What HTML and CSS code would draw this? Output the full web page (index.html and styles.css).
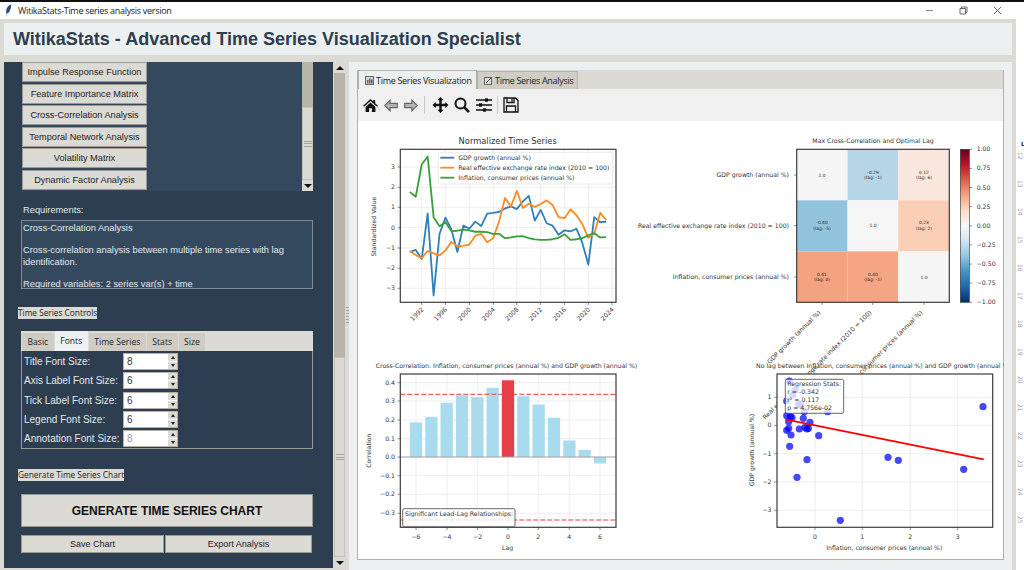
FILE: index.html
```html
<!DOCTYPE html>
<html lang="en">
<head>
    <meta charset="UTF-8">
    <title>WitikaStats-Time series analysis version</title>
    <link rel="stylesheet" href="styles.css">
</head>
<body>
<div class="topline"></div>
<div class="screen">
<div class="app">
    <div class="titlebar">
        <svg class="feather" viewBox="0 0 8 14"><path d="M7 0C3 1 1 5 1.500 10L1 14 2 10.500C5 10 7 5 7 0Z"/></svg>
        <span class="titlebar-text">WitikaStats-Time series analysis version</span>
        <div class="winbtns">
            <svg viewBox="0 0 9 9"><path d="M1 4.500H8" class="win-min"/></svg>
            <svg viewBox="0 0 9 9"><path d="M1 2.500H6.500V8H1ZM2.500 2.500V1H8V6.500H6.500" class="win-ico"/></svg>
            <svg viewBox="0 0 9 9"><path d="M1 1L8 8M8 1L1 8" class="win-ico"/></svg>
        </div>
    </div>
    <div class="window">
        <header class="app-header">WitikaStats - Advanced Time Series Visualization Specialist</header>
        <div class="main">
            <aside class="sidebar">
                <div class="method-box">
                    <div class="method-list">
                        <button class="method-btn">Impulse Response Function</button>
                        <button class="method-btn">Feature Importance Matrix</button>
                        <button class="method-btn">Cross-Correlation Analysis</button>
                        <button class="method-btn">Temporal Network Analysis</button>
                        <button class="method-btn">Volatility Matrix</button>
                        <button class="method-btn">Dynamic Factor Analysis</button>
                    </div>
                    <div class="scroll scroll-inner">
                        <div class="scroll-trough"></div>
                        <div class="scroll-thumb"><span class="grip"></span></div>
                        <div class="scroll-arrow down"></div>
                    </div>
                </div>

                <div class="req-label">Requirements:</div>
                <div class="req-text">
                    <p>Cross-Correlation Analysis</p>
                    <p>Cross-correlation analysis between multiple time series with lag identification.</p>
                    <p>Required variables: 2 series var(s) + time</p>
                </div>

                <div class="section-label controls-label">Time Series Controls</div>
                <div class="controls">
                    <div class="sub-tabs">
                        <span class="sub-tab">Basic</span>
                        <span class="sub-tab active">Fonts</span>
                        <span class="sub-tab">Time Series</span>
                        <span class="sub-tab">Stats</span>
                        <span class="sub-tab">Size</span>
                    </div>
                    <div class="font-form">
                        <label>Title Font Size:</label>
                        <div class="spin"><span class="spin-val">8</span><span class="spin-btns"><i class="up"></i><i class="dn"></i></span></div>
                        <label>Axis Label Font Size:</label>
                        <div class="spin"><span class="spin-val">6</span><span class="spin-btns"><i class="up"></i><i class="dn"></i></span></div>
                        <label>Tick Label Font Size:</label>
                        <div class="spin"><span class="spin-val">6</span><span class="spin-btns"><i class="up"></i><i class="dn"></i></span></div>
                        <label>Legend Font Size:</label>
                        <div class="spin"><span class="spin-val">6</span><span class="spin-btns"><i class="up"></i><i class="dn"></i></span></div>
                        <label>Annotation Font Size:</label>
                        <div class="spin"><span class="spin-val faded">8</span><span class="spin-btns"><i class="up"></i><i class="dn"></i></span></div>
                    </div>
                </div>

                <div class="section-label generate-label">Generate Time Series Chart</div>
                <button class="generate-btn">GENERATE TIME SERIES CHART</button>
                <div class="action-row">
                    <button class="action-btn save">Save Chart</button>
                    <button class="action-btn export">Export Analysis</button>
                </div>
            </aside>

            <div class="scroll scroll-outer">
                <div class="scroll-arrow up"></div>
                <div class="scroll-trough"></div>
                <div class="scroll-thumb"><span class="grip"></span></div>
                <div class="scroll-arrow down"></div>
            </div>
            <div class="sash"><span class="sash-dots"></span></div>

            <section class="results">
                <div class="notebook">
                    <div class="tabs">
                        <div class="tab active">
                            <svg class="tab-ico" viewBox="0 0 9 9"><rect x=".5" y=".5" width="8" height="8" fill="#d8d4c8" stroke="#666"/><rect x="2" y="4" width="1.500" height="3.500" fill="#b5482e"/><rect x="4" y="2.500" width="1.500" height="5" fill="#3b6ea5"/><rect x="6" y="3.500" width="1.500" height="4" fill="#555"/></svg>
                            Time Series Visualization
                        </div>
                        <div class="tab">
                            <svg class="tab-ico" viewBox="0 0 9 9"><rect x=".5" y="1.500" width="7" height="7" fill="#ddd" stroke="#666"/><path d="M2 7L8 1" stroke="#555" fill="none"/></svg>
                            Time Series Analysis
                        </div>
                    </div>
                    <div class="toolbar">
                        <span class="tool tool-home"><svg viewBox="0 0 16 14"><path d="M8 0L11 2.700V1H13V4.500L16 7.300 15 8.400 8 2.200 1 8.400 0 7.300ZM2.700 8.500L8 3.800 13.300 8.500V14H9.500V10H6.500V14H2.700Z"/></svg></span>
                        <span class="tool tool-back"><svg viewBox="0 0 16 14"><path class="muted" d="M7 0.800L0.800 7 7 13.200V9.500H15.200V4.500H7Z"/></svg></span>
                        <span class="tool tool-fwd"><svg viewBox="0 0 16 14"><path class="muted" d="M9 0.800L15.200 7 9 13.200V9.500H0.800V4.500H9Z"/></svg></span>
                        <span class="tool-sep first"></span>
                        <span class="tool tool-move"><svg viewBox="0 0 16 16"><path d="M8 0L11 3.300H9.200V6.800H12.700V5L16 8 12.700 11V9.200H9.200V12.700H11L8 16 5 12.700H6.800V9.200H3.300V11L0 8 3.300 5V6.800H6.800V3.300H5Z"/></svg></span>
                        <span class="tool"><svg viewBox="0 0 16 16"><circle cx="6.500" cy="6.500" r="5" class="stroke"/><path d="M10.300 10.300L15 15" class="stroke thick"/></svg></span>
                        <span class="tool"><svg viewBox="0 0 16 16"><path d="M0 3H16M0 8H16M0 13H16" class="stroke thin"/><rect x="9" y="1.300" width="3" height="3.400"/><rect x="3" y="6.300" width="3" height="3.400"/><rect x="7" y="11.300" width="3" height="3.400"/></svg></span>
                        <span class="tool-sep"></span>
                        <span class="tool"><svg viewBox="0 0 16 16"><path d="M1 1H12.500L15 3.500V15H1Z" class="stroke thin"/><path d="M4 1V5.500H11V1M9 2V4.500" class="stroke thin"/><path d="M3.500 15V9H12.500V15" class="stroke thin"/></svg></span>
                    </div>
                    <div class="plot-area">
                        <svg class="figure" viewBox="357 121 646 439">
                            <defs>
                                <linearGradient id="rdbu" x1="0" y1="0" x2="0" y2="1">
                                    <stop offset="0" stop-color="#67001f"/>
                                    <stop offset=".1" stop-color="#b2182b"/>
                                    <stop offset=".2" stop-color="#d6604d"/>
                                    <stop offset=".3" stop-color="#f4a582"/>
                                    <stop offset=".4" stop-color="#fddbc7"/>
                                    <stop offset=".5" stop-color="#f7f7f7"/>
                                    <stop offset=".6" stop-color="#d1e5f0"/>
                                    <stop offset=".7" stop-color="#92c5de"/>
                                    <stop offset=".8" stop-color="#4393c3"/>
                                    <stop offset=".9" stop-color="#2166ac"/>
                                    <stop offset="1" stop-color="#053061"/>
                                </linearGradient>
                            </defs>

                            <!-- normalized series -->
                            <text class="title big" x="506.700" y="143.500">Normalized Time Series</text>
                            <path class="grid" d="M399 167H615M399 187.300H615M399 207.300H615M399 227.700H615M399 248H615M399 268.300H615M399 288.300H615M420.700 149V302M444.300 149V302M468.300 149V302M492.300 149V302M515.700 149V302M539.300 149V302M563.300 149V302M587.300 149V302M611 149V302"/>
                            <g transform="translate(420.700 227.700) scale(5.950 -20.250)">
                                <polyline class="series blue" points="-2,-1.2 -1,-1.1 0,-1.55 1,.7 2,-3.35 3,-.3 4,.5 5,-.1 6,-1.2 7,.1 8,-.05 9,.3 10,.08 11,.7 12,.73 13,.78 14,.95 15,1.05 16,.92 17,1.3 18,1.57 19,.35 20,.88 21,.22 22,.1 23,-.35 24,-.13 25,-.18 26,-.05 27,-.75 28,-1.82 29,.52 30,.27 31,.3"/>
                                <polyline class="series orange" points="-2,-1.15 -1,-1.35 0,-1.5 1,-1.15 2,-1.27 3,-1.37 4,-1.12 5,-.7 6,-.92 7,-.9 8,-.83 9,-.4 10,-.3 11,-.72 12,-.52 13,.3 14,1.47 15,1.05 16,1.82 17,.97 18,1.18 19,1.03 20,1.17 21,1.35 22,1.12 23,.52 24,.47 25,.9 26,.62 27,.18 28,-.5 29,-.3 30,.73 31,.38"/>
                                <polyline class="series green" points="-2,1.77 -1,1.53 0,3.12 1,3.52 2,.52 3,.07 4,.27 5,-.17 6,-.15 7,-.1 8,-.13 9,-.2 10,-.2 11,-.22 12,-.3 13,-.3 14,-.52 15,-.48 16,-.43 17,-.42 18,-.52 19,-.58 20,-.6 21,-.6 22,-.57 23,-.5 24,-.32 25,-.6 26,-.57 27,-.52 28,-.38 29,-.27 30,-.48 31,-.47"/>
                            </g>
                            <rect class="frame" x="399.300" y="149.300" width="215.700" height="153"/>
                            <path class="tick" d="M396.500 167H399.300M396.500 187.300H399.300M396.500 207.300H399.300M396.500 227.700H399.300M396.500 248H399.300M396.500 268.300H399.300M396.500 288.300H399.300M420.700 302.300V305M444.300 302.300V305M468.300 302.300V305M492.300 302.300V305M515.700 302.300V305M539.300 302.300V305M563.300 302.300V305M587.300 302.300V305M611 302.300V305"/>
                            <rect class="legend-box" x="437.300" y="152.300" width="174.400" height="31.700" rx="1"/>
                            <path class="legend-key blue" d="M439.300 157.700H453.300"/>
                            <path class="legend-key orange" d="M439.300 167.700H453.300"/>
                            <path class="legend-key green" d="M439.300 177.700H453.300"/>
                            <text class="lbl" x="457.300" y="159.700">GDP growth (annual %)</text>
                            <text class="lbl" x="457.300" y="169.700">Real effective exchange rate index (2010 = 100)</text>
                            <text class="lbl" x="457.300" y="179.700">Inflation, consumer prices (annual %)</text>
                            <g class="lbl end">
                                <text x="394" y="169">3</text>
                                <text x="394" y="189.300">2</text>
                                <text x="394" y="209.300">1</text>
                                <text x="394" y="229.700">0</text>
                                <text x="394" y="250">−1</text>
                                <text x="394" y="270.300">−2</text>
                                <text x="394" y="290.300">−3</text>
                                <text transform="rotate(-45 423 310)" x="423" y="310">1992</text>
                                <text transform="rotate(-45 446.600 310)" x="446.600" y="310">1996</text>
                                <text transform="rotate(-45 470.600 310)" x="470.600" y="310">2000</text>
                                <text transform="rotate(-45 494.600 310)" x="494.600" y="310">2004</text>
                                <text transform="rotate(-45 518 310)" x="518" y="310">2008</text>
                                <text transform="rotate(-45 541.600 310)" x="541.600" y="310">2012</text>
                                <text transform="rotate(-45 565.600 310)" x="565.600" y="310">2016</text>
                                <text transform="rotate(-45 589.600 310)" x="589.600" y="310">2020</text>
                                <text transform="rotate(-45 613.300 310)" x="613.300" y="310">2024</text>
                            </g>
                            <text class="lbl mid" transform="rotate(-90 375.500 226.700)" x="375.500" y="226.700">Standardized Value</text>

                            <!-- heatmap -->
                            <text class="title" x="872" y="143">Max Cross-Correlation and Optimal Lag</text>
                            <rect x="795.700" y="149.300" width="50.800" height="51" fill="#f5f5f5"/>
                            <rect x="846.500" y="149.300" width="50.800" height="51" fill="#b5d6e7"/>
                            <rect x="897.300" y="149.300" width="51" height="51" fill="#f9e6dc"/>
                            <rect x="795.700" y="200.300" width="50.800" height="51" fill="#93c4dd"/>
                            <rect x="846.500" y="200.300" width="50.800" height="51" fill="#f6f6f6"/>
                            <rect x="897.300" y="200.300" width="51" height="51" fill="#fbcfb6"/>
                            <rect x="795.700" y="251.300" width="50.800" height="51" fill="#f4a380"/>
                            <rect x="846.500" y="251.300" width="50.800" height="51" fill="#f4a684"/>
                            <rect x="897.300" y="251.300" width="51" height="51" fill="#f5f5f5"/>
                            <rect class="frame" x="795.700" y="149.300" width="152.600" height="153"/>
                            <path class="tick" d="M793 175H795.700M793 225.700H795.700M793 277H795.700M821 302.300V305M871.700 302.300V305M923 302.300V305M968.300 149.300H971M968.300 168.400H971M968.300 187.500H971M968.300 206.700H971M968.300 225.800H971M968.300 244.900H971M968.300 264.100H971M968.300 283.200H971M968.300 302.300H971"/>
                            <g class="cell">
                                <text x="821" y="176.500">1.0</text>
                                <text x="872" y="173.800">-0.29</text>
                                <text x="872" y="179.200">(lag: -1)</text>
                                <text x="923" y="173.800">0.12</text>
                                <text x="923" y="179.200">(lag: 6)</text>
                                <text x="821" y="224.200">-0.40</text>
                                <text x="821" y="230.200">(lag: -5)</text>
                                <text x="872" y="227.200">1.0</text>
                                <text x="923" y="224.200">0.23</text>
                                <text x="923" y="230.200">(lag: 2)</text>
                                <text x="821" y="275.500">0.41</text>
                                <text x="821" y="280.800">(lag: 0)</text>
                                <text x="872" y="275.500">0.40</text>
                                <text x="872" y="280.800">(lag: -1)</text>
                                <text x="923" y="278.500">1.0</text>
                            </g>
                            <g class="lbl end">
                                <text x="788" y="177">GDP growth (annual %)</text>
                                <text x="788" y="227.700">Real effective exchange rate index (2010 = 100)</text>
                                <text x="788" y="279">Inflation, consumer prices (annual %)</text>
                                <text transform="rotate(-45 820 313)" x="820" y="313">GDP growth (annual %)</text>
                                <text transform="rotate(-45 871 313)" x="871" y="313">Real effective exchange rate index (2010 = 100)</text>
                                <text transform="rotate(-45 922 313)" x="922" y="313">Inflation, consumer prices (annual %)</text>
                            </g>
                            <rect x="959.300" y="149.300" width="9" height="153" fill="url(#rdbu)" stroke="#333" stroke-width=".6"/>
                            <g class="lbl">
                                <text x="975.700" y="151.300">1.00</text>
                                <text x="975.700" y="170.400">0.75</text>
                                <text x="975.700" y="189.500">0.50</text>
                                <text x="975.700" y="208.700">0.25</text>
                                <text x="975.700" y="227.800">0.00</text>
                                <text x="975.700" y="246.900">−0.25</text>
                                <text x="975.700" y="266.100">−0.50</text>
                                <text x="975.700" y="285.200">−0.75</text>
                                <text x="975.700" y="304.300">−1.00</text>
                            </g>

                            <!-- lag bars -->
                            <text class="lbl" x="374.700" y="367.700">Cross-Correlation: Inflation, consumer prices (annual %) and GDP growth (annual %)</text>
                            <rect x="399.300" y="374" width="215.700" height="153.300" fill="#fff"/>
                            <path class="grid" d="M399 382.700H615M399 401H615M399 420H615M399 438.700H615M399 475.700H615M399 494.300H615M399 513.300H615M415 374V527M446 374V527M476.700 374V527M507 374V527M537.300 374V527M568.300 374V527M599 374V527"/>
                            <g class="bars">
                                <rect x="408.850" y="422.400" width="12.300" height="34.600"/>
                                <rect x="424.200" y="416.800" width="12.300" height="40.200"/>
                                <rect x="439.500" y="402.800" width="12.300" height="54.200"/>
                                <rect x="454.850" y="395.300" width="12.300" height="61.700"/>
                                <rect x="470.200" y="397.200" width="12.300" height="59.800"/>
                                <rect x="485.500" y="387.800" width="12.300" height="69.200"/>
                                <rect x="516.200" y="396.200" width="12.300" height="60.800"/>
                                <rect x="531.500" y="404.600" width="12.300" height="52.400"/>
                                <rect x="546.850" y="417.700" width="12.300" height="39.300"/>
                                <rect x="562.200" y="440.500" width="12.300" height="16.500"/>
                                <rect x="577.500" y="449.900" width="12.300" height="7.100"/>
                                <rect x="592.850" y="457" width="12.300" height="6.500"/>
                            </g>
                            <rect x="500.850" y="380.300" width="12.300" height="76.700" fill="#e5404a"/>
                            <path class="zero" d="M399.300 457H615"/>
                            <path class="limit" d="M399.300 394.300H615M399.300 520H615"/>
                            <rect class="frame" x="399.300" y="374" width="215.700" height="153.300"/>
                            <path class="tick" d="M396.500 382.700H399.300M396.500 401H399.300M396.500 420H399.300M396.500 438.700H399.300M396.500 457H399.300M396.500 475.700H399.300M396.500 494.300H399.300M396.500 513.300H399.300M415 527.300V530M446 527.300V530M476.700 527.300V530M507 527.300V530M537.300 527.300V530M568.300 527.300V530M599 527.300V530"/>
                            <rect class="note-box" x="401.700" y="508.700" width="112.300" height="18" rx="1.500"/>
                            <text class="lbl" x="404" y="515.800">Significant Lead-Lag Relationships:</text>
                            <g class="lbl end">
                                <text x="394" y="384.700">0.4</text>
                                <text x="394" y="403">0.3</text>
                                <text x="394" y="422">0.2</text>
                                <text x="394" y="440.700">0.1</text>
                                <text x="394" y="459">0.0</text>
                                <text x="394" y="477.700">−0.1</text>
                                <text x="394" y="496.300">−0.2</text>
                                <text x="394" y="515.300">−0.3</text>
                            </g>
                            <g class="lbl mid">
                                <text x="415" y="539">−6</text>
                                <text x="446" y="539">−4</text>
                                <text x="476.700" y="539">−2</text>
                                <text x="507" y="539">0</text>
                                <text x="537.300" y="539">2</text>
                                <text x="568.300" y="539">4</text>
                                <text x="599" y="539">6</text>
                                <text x="506.700" y="549.500">Lag</text>
                                <text transform="rotate(-90 370 450.700)" x="370" y="450.700">Correlation</text>
                            </g>

                            <!-- regression scatter -->
                            <text class="lbl" x="755" y="367.700">No lag between Inflation, consumer prices (annual %) and GDP growth (annual %)</text>
                            <rect x="776" y="374" width="215.700" height="153.300" fill="#fff"/>
                            <path class="grid" d="M776 397.300H992M776 425.300H992M776 453.700H992M776 482H992M776 510.300H992M814 374V527M861.300 374V527M909.300 374V527M956.700 374V527"/>
                            <g class="dots">
                                <circle cx="788.300" cy="381" r="3.600"/>
                                <circle cx="794" cy="390" r="3.600"/>
                                <circle cx="791.700" cy="395" r="3.600"/>
                                <circle cx="785.700" cy="401" r="3.600"/>
                                <circle cx="800" cy="405" r="3.600"/>
                                <circle cx="797.300" cy="404" r="3.600"/>
                                <circle cx="803.300" cy="411.700" r="3.600"/>
                                <circle cx="826.700" cy="411.700" r="3.600"/>
                                <circle cx="785.700" cy="415.700" r="3.600"/>
                                <circle cx="791" cy="417.700" r="3.600"/>
                                <circle cx="789.300" cy="416.700" r="3.600"/>
                                <circle cx="802.300" cy="418.300" r="3.600"/>
                                <circle cx="787.700" cy="421.700" r="3.600"/>
                                <circle cx="809" cy="422.300" r="3.600"/>
                                <circle cx="785.700" cy="430.300" r="3.600"/>
                                <circle cx="787.700" cy="428.300" r="3.600"/>
                                <circle cx="798.300" cy="429" r="3.600"/>
                                <circle cx="807.300" cy="428.300" r="3.600"/>
                                <circle cx="804" cy="427.300" r="3.600"/>
                                <circle cx="806" cy="429" r="3.600"/>
                                <circle cx="790" cy="435" r="3.600"/>
                                <circle cx="817.700" cy="435.700" r="3.600"/>
                                <circle cx="788.700" cy="446.300" r="3.600"/>
                                <circle cx="806" cy="459.700" r="3.600"/>
                                <circle cx="796" cy="477.300" r="3.600"/>
                                <circle cx="839.300" cy="520.300" r="3.600"/>
                                <circle cx="887" cy="457.300" r="3.600"/>
                                <circle cx="897.300" cy="460.300" r="3.600"/>
                                <circle cx="962.700" cy="469.300" r="3.600"/>
                                <circle cx="982" cy="406.700" r="3.600"/>
                            </g>
                            <path class="fit" d="M784.300 419.300L982.700 459.300"/>
                            <rect class="frame" x="776" y="374" width="215.700" height="153.300"/>
                            <path class="tick" d="M773.200 397.300H776M773.200 425.300H776M773.200 453.700H776M773.200 482H776M773.200 510.300H776M814 527.300V530M861.300 527.300V530M909.300 527.300V530M956.700 527.300V530"/>
                            <rect class="note-box" x="784.300" y="379.300" width="58.400" height="34" rx="1.500"/>
                            <g class="lbl">
                                <text x="786.300" y="386.200">Regression Stats:</text>
                                <text x="786.300" y="394.300">r = -0.342</text>
                                <text x="786.300" y="401.800">r² = 0.117</text>
                                <text x="786.300" y="410">p = 4.756e-02</text>
                            </g>
                            <g class="lbl end">
                                <text x="770.500" y="399.300">1</text>
                                <text x="770.500" y="427.300">0</text>
                                <text x="770.500" y="455.700">−1</text>
                                <text x="770.500" y="484">−2</text>
                                <text x="770.500" y="512.300">−3</text>
                            </g>
                            <g class="lbl mid">
                                <text x="814" y="539">0</text>
                                <text x="861.300" y="539">1</text>
                                <text x="909.300" y="539">2</text>
                                <text x="956.700" y="539">3</text>
                                <text x="883.300" y="549.500">Inflation, consumer prices (annual %)</text>
                                <text transform="rotate(-90 752.500 450)" x="752.500" y="450">GDP growth (annual %)</text>
                            </g>
                        </svg>
                    </div>
                </div>
            </section>
        </div>
    </div>
</div>
<div class="edge">
    <b>L</b>
    <span>12</span><span>13</span><span>14</span><span>15</span><span>16</span><span>17</span><span>18</span><span>19</span><span>20</span><span>21</span><span>22</span><span>23</span><span>24</span><span>25</span>
</div>
</div>
</body>
</html>
```

FILE: styles.css
```css
* {
    margin: 0;
    padding: 0;
    box-sizing: border-box;
}

html, body {
    height: 570px;
    overflow: hidden;
    background: #fff;
}

body {
    display: flex;
    flex-direction: column;
    font-family: "Liberation Sans", Arial, sans-serif;
    color: #222;
}

button {
    font-family: "Liberation Sans", Arial, sans-serif;
    color: #222;
    background: #dcdad5;
    border: 1px solid #9c988f;
    border-radius: 0;
    white-space: nowrap;
}

.topline {
    height: 2px;
    background: #111;
    flex: none;
}

.screen {
    display: flex;
    flex: 1;
    min-height: 0;
}

.app {
    width: 1016px;
    display: flex;
    flex-direction: column;
    flex: none;
}

/* window title */
.titlebar {
    height: 17px;
    flex: none;
    display: flex;
    align-items: center;
    background: #fff;
    padding-left: 5px;
    position: relative;
}

.feather {
    width: 7px;
    height: 13px;
    fill: #2d4a6e;
    flex: none;
}

.titlebar-text {
    margin-left: 6px;
    font-family: "Open Sans", sans-serif;
    font-size: 9px;
    letter-spacing: -.3px;
    color: #222;
}

.winbtns {
    margin-left: auto;
    display: flex;
    gap: 25px;
    margin-right: 14px;
}

.winbtns svg {
    width: 9px;
    height: 9px;
}

.win-ico {
    fill: none;
    stroke: #444;
    stroke-width: .8;
}

.win-min {
    fill: none;
    stroke: #888;
    stroke-width: 1;
}

/* main window */
.window {
    flex: 1;
    min-height: 0;
    background: #dcdad5;
    padding: 4px 4px 0;
    display: flex;
    flex-direction: column;
}

.app-header {
    height: 32px;
    flex: none;
    background: #ecf0f1;
    color: #2c3e50;
    font-weight: bold;
    font-size: 18px;
    line-height: 32px;
    padding-left: 9px;
}

.main {
    flex: 1;
    min-height: 0;
    display: flex;
    margin-top: 7px;
}

/* left side */
.sidebar {
    width: 329px;
    flex: none;
    background: #2c3e50;
    padding-left: 17px;
    margin-bottom: 2px;
}

.method-box {
    width: 291px;
    height: 129px;
    margin-left: 1px;
    display: flex;
}

.method-list {
    width: 280px;
    background: #34495e;
    display: flex;
    flex-direction: column;
    gap: 1.600px;
}

.method-btn {
    width: 125px;
    height: 20px;
    padding: 0;
    font-size: 9.200px;
    flex: none;
}

.scroll {
    display: flex;
    flex-direction: column;
    flex: none;
    width: 11px;
}

.scroll-inner {
    background: #b8b4aa;
}

.scroll-outer {
    margin-left: 1px;
    margin-bottom: 2px;
}

.scroll-trough {
    background: #b8b4aa;
}

.scroll-inner .scroll-trough {
    height: 45px;
}

.scroll-outer .scroll-trough {
    height: 284px;
}

.scroll-thumb {
    flex: 1;
    background: #dcdad5;
    border: 1px solid #c4c1b9;
    display: flex;
    align-items: center;
    justify-content: center;
}

.grip {
    width: 8px;
    height: 6px;
    border-top: 1px solid #a8a59c;
    border-bottom: 1px solid #a8a59c;
    background: linear-gradient(#a8a59c, #a8a59c) center / 100% 1px no-repeat;
}

.scroll-arrow {
    height: 11px;
    flex: none;
    background: #dcdad5;
    display: flex;
    align-items: center;
    justify-content: center;
}

.scroll-arrow::before {
    content: "";
    border-left: 4px solid transparent;
    border-right: 4px solid transparent;
}

.scroll-arrow.up::before {
    border-bottom: 4px solid #111;
}

.scroll-arrow.down::before {
    border-top: 4px solid #111;
}

.sash {
    width: 4px;
    flex: none;
    display: flex;
    align-items: flex-start;
    justify-content: center;
}

.sash-dots {
    display: block;
    width: 3px;
    height: 16px;
    margin-top: 245px;
    background: repeating-linear-gradient(#aaa79e 0 1px, transparent 1px 3px);
}

.req-label {
    font-size: 9.300px;
    line-height: 12px;
    color: #e4e8ea;
    margin: 13px 0 4px 2px;
}

.req-text {
    width: 292px;
    height: 69px;
    background: #34495e;
    border: 1px solid #7d8b99;
    color: #e4e8ea;
    font-size: 9.300px;
    line-height: 11.200px;
    padding: 2px 1px;
    overflow: hidden;
}

.req-text p {
    margin-bottom: 11.200px;
}

.section-label {
    display: table;
    background: #dcdad5;
    color: #222;
    font-family: "Open Sans", sans-serif;
    font-size: 8.300px;
    line-height: 12px;
    margin-left: -3px;
}

.controls-label {
    margin-top: 18px;
}

.controls {
    width: 292px;
    margin: 12px 0 0;
}

.sub-tabs {
    height: 20px;
    background: #dcdad5;
    display: flex;
    align-items: flex-end;
    padding-left: 1px;
    gap: 1px;
}

.sub-tab {
    height: 18px;
    padding: 0 5.500px;
    background: #cfccc4;
    font-family: "Open Sans", sans-serif;
    font-size: 8.600px;
    line-height: 18px;
    color: #222;
}

.sub-tab.active {
    height: 20px;
    background: #ecf0f1;
    line-height: 20px;
}

.font-form {
    height: 98px;
    background: #2c3e50;
    border: 1px solid #9b9b96;
    border-top: none;
    padding: 2px 0 0 2px;
    display: grid;
    grid-template-columns: 99px 55px;
    grid-auto-rows: 17px;
    row-gap: 2.300px;
    align-items: center;
}

.font-form label {
    font-size: 10px;
    color: #e4e8ea;
}

.spin {
    height: 17px;
    background: #fff;
    border: 1px solid #b5b1a8;
    display: flex;
    justify-content: space-between;
}

.spin-val {
    font-size: 10px;
    line-height: 15px;
    padding-left: 3px;
    color: #333;
}

.spin-val.faded {
    color: #999;
}

.spin-btns {
    width: 9px;
    display: flex;
    flex-direction: column;
    gap: 1px;
    background: #fff;
}

.spin-btns i {
    flex: 1;
    background: #dcdad5;
    display: flex;
    align-items: center;
    justify-content: center;
}

.spin-btns i::before {
    content: "";
    border-left: 2.500px solid transparent;
    border-right: 2.500px solid transparent;
}

.spin-btns .up::before {
    border-bottom: 3px solid #222;
}

.spin-btns .dn::before {
    border-top: 3px solid #222;
}

.generate-label {
    margin-top: 20px;
}

.generate-btn {
    display: block;
    width: 292px;
    height: 33px;
    margin: 13px 0 0;
    font-size: 12px;
    font-weight: bold;
    color: #111;
}

.action-row {
    display: flex;
    width: 292px;
    margin: 8px 0 0;
    gap: 1px;
}

.action-btn {
    height: 18px;
    font-size: 9px;
}

.action-btn.save {
    width: 143px;
}

.action-btn.export {
    width: 147px;
}

/* right side */
.results {
    flex: 1;
    min-width: 0;
    background: #ecf0f1;
    padding: 8px 8px 10px;
}

.notebook {
    height: 100%;
    display: flex;
    flex-direction: column;
    border: 1px solid #b5b1a8;
    border-top: none;
    background: #fff;
}

.tabs {
    height: 19px;
    flex: none;
    display: flex;
    align-items: flex-end;
    background: #dcdad5;
}

.tab {
    height: 18px;
    padding-left: 6px;
    width: 101px;
    display: flex;
    align-items: center;
    gap: 2px;
    background: #d0cdc5;
    border: 1px solid #b5b1a8;
    border-bottom: none;
    font-family: "Open Sans", sans-serif;
    font-size: 9px;
    letter-spacing: -.3px;
    white-space: nowrap;
    color: #222;
}

.tab.active {
    height: 19px;
    width: 119px;
    background: #ecf0f1;
}

.tab-ico {
    width: 9px;
    height: 9px;
    flex: none;
}

.toolbar {
    height: 32px;
    flex: none;
    background: #f0f0f0;
    display: flex;
    align-items: center;
    padding-left: 1px;
}

.tool {
    width: 22px;
    height: 22px;
    display: flex;
    align-items: center;
    justify-content: center;
}

.tool svg {
    width: 16px;
    height: 16px;
    fill: #111;
}

.tool-home svg {
    width: 15px;
    height: 13px;
}

.tool-back svg,
.tool-fwd svg {
    width: 14px;
    height: 13px;
}

.tool-back,
.tool-fwd {
    width: 20px;
}

.tool-move svg {
    width: 17px;
    height: 16px;
}

.tool .muted {
    fill: #b4b4b4;
    stroke: #666;
    stroke-width: 1.300;
}

.tool .stroke {
    fill: none;
    stroke: #111;
    stroke-width: 2;
}

.tool .stroke.thick {
    stroke-width: 2.600;
}

.tool .stroke.thin {
    stroke-width: 1.300;
}

.tool-sep {
    width: 1px;
    height: 18px;
    background: #c8c8c8;
    margin: 0 2px 0 2px;
}

.tool-sep.first {
    margin: 0 4px 0 3px;
}

.plot-area {
    flex: 1;
    min-height: 0;
}

/* matplotlib figure */
.figure {
    display: block;
    width: 646px;
    height: 439px;
    overflow: hidden;
}

.figure text {
    font-family: "DejaVu Sans", sans-serif;
    fill: #333;
}

.title {
    font-size: 6.200px;
    text-anchor: middle;
}

.title.big {
    font-size: 8.300px;
}

.lbl {
    font-size: 6.200px;
}

.lbl.end {
    text-anchor: end;
}

.lbl.mid {
    text-anchor: middle;
}

.cell {
    font-size: 4.400px;
    text-anchor: middle;
}

.figure .cell text {
    fill: #222;
}

.grid {
    fill: none;
    stroke: #e8e8e8;
    stroke-width: .8;
}

.frame {
    fill: none;
    stroke: #3c3c3c;
    stroke-width: 1.200;
}

.tick {
    fill: none;
    stroke: #444;
    stroke-width: .6;
}

.series {
    fill: none;
    stroke-width: 1.800;
    vector-effect: non-scaling-stroke;
    stroke-linejoin: round;
}

.series.blue, .legend-key.blue {
    stroke: #2f7fb8;
}

.series.orange, .legend-key.orange {
    stroke: #fb8b24;
}

.series.green, .legend-key.green {
    stroke: #38a03a;
}

.legend-box {
    fill: #fff;
    fill-opacity: .8;
    stroke: #dcdcdc;
    stroke-width: .6;
}

.legend-key {
    fill: none;
    stroke-width: 1.800;
}

.bars rect {
    fill: #a9dbef;
}

.zero {
    fill: none;
    stroke: #a0a0a0;
    stroke-width: 1.200;
}

.limit {
    fill: none;
    stroke: #f33a3a;
    stroke-width: 1;
    stroke-dasharray: 5 2;
}

.note-box {
    fill: #fff;
    fill-opacity: .8;
    stroke: #444;
    stroke-width: .8;
}

.dots circle {
    fill: #0000ff;
    fill-opacity: .72;
}

.fit {
    fill: none;
    stroke: #ff0000;
    stroke-width: 1.800;
}

/* the page behind the window */
.edge {
    flex: 1;
    display: flex;
    flex-direction: column;
    padding: 138px 0 0 5px;
    overflow: hidden;
    font-family: "DejaVu Sans", sans-serif;
    font-size: 6px;
    color: #999;
}

.edge b {
    color: #222;
    height: 12px;
}

.edge span {
    height: 28px;
    writing-mode: vertical-rl;
    line-height: 7px;
}
```
